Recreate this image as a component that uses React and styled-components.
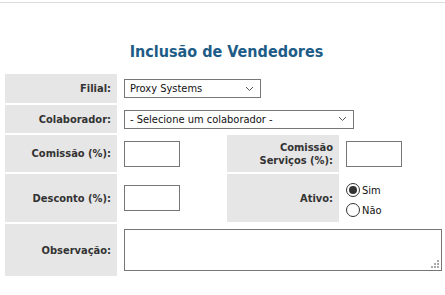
import React from 'react'
import styled, { createGlobalStyle } from 'styled-components'

const GlobalStyle = createGlobalStyle`
    body {
        margin: 0;
        background: #fff;
        font-family: "DejaVu Sans Condensed", "DejaVu Sans", sans-serif;
        color: #333;
    }
`

const Page = styled.div`
    width: 445px;
    height: 295px;
    padding-top: 2px;
    box-sizing: border-box;
`

const TopRule = styled.div`
    height: 1px;
    background: #dcdcdc;
`

const Title = styled.h2`
    margin: 39px 0 0;
    height: 32px;
    text-align: center;
    font-size: 16px;
    font-weight: bold;
    color: #1d5c87;
    padding-left: 8px;
`

const FormGrid = styled.div`
    display: grid;
    grid-template-columns: 112px 106px 112px 102px;
    grid-template-rows: 29px 28px 37px 48px 52px;
    gap: 2px;
    padding-left: 5px;
`

const Label = styled.div`
    background: #e6e6e6;
    display: flex;
    align-items: center;
    justify-content: flex-end;
    text-align: right;
    padding-right: 6px;
    font-size: 11px;
    font-weight: bold;
    line-height: 13px;
    color: #333;
`

const Field = styled.div`
    display: flex;
    align-items: center;
    padding-left: 5px;
    grid-column: ${p => p.$span ? `span ${p.$span}` : 'auto'};
`

const Select = styled.div`
    width: ${p => p.$width}px;
    height: 19px;
    box-sizing: border-box;
    border: 1px solid #767676;
    display: flex;
    align-items: center;
    justify-content: space-between;
    padding: 0 6px 0 5px;
    font-size: 11px;
    color: #111;
    background: #fff;
`

const TextInput = styled.div`
    width: 56px;
    height: 26px;
    box-sizing: border-box;
    border: 1px solid #767676;
    background: #fff;
`

const TextArea = styled.div`
    position: relative;
    width: 318px;
    height: 42px;
    box-sizing: border-box;
    border: 1px solid #767676;
    background: #fff;
`

const Grip = styled.svg`
    position: absolute;
    right: 1px;
    bottom: 1px;
`

const RadioGroup = styled.div`
    display: flex;
    flex-direction: column;
    gap: 6px;
    padding-top: 4px;
`

const RadioRow = styled.div`
    display: flex;
    align-items: center;
    gap: 2px;
    font-size: 11px;
    color: #111;
`

const RadioCircle = styled.span`
    width: 12px;
    height: 12px;
    border: 1px solid #333;
    border-radius: 50%;
    display: flex;
    align-items: center;
    justify-content: center;
    background: #fff;

    &::after {
        content: '';
        width: 8px;
        height: 8px;
        border-radius: 50%;
        background: ${p => p.$checked ? '#333' : 'transparent'};
    }
`

const Chevron = () => (
    <svg width='9' height='6' viewBox='0 0 9 6'>
        <path d='M1 1 L4.5 4.5 L8 1' fill='none' stroke='#555' strokeWidth='1' />
    </svg>
)

const Radio = ({ checked, children }) => (
    <RadioRow>
        <RadioCircle $checked={checked} />
        {children}
    </RadioRow>
)

export default function App () {
    return (
        <Page>
            <GlobalStyle />
            <TopRule />
            <Title>Inclusão de Vendedores</Title>
            <FormGrid>
                <Label>Filial:</Label>
                <Field $span={3}>
                    <Select $width={137}>Proxy Systems<Chevron /></Select>
                </Field>

                <Label>Colaborador:</Label>
                <Field $span={3}>
                    <Select $width={230}>- Selecione um colaborador -<Chevron /></Select>
                </Field>

                <Label>Comissão (%):</Label>
                <Field><TextInput /></Field>
                <Label>Comissão<br />Serviços (%):</Label>
                <Field><TextInput /></Field>

                <Label>Desconto (%):</Label>
                <Field><TextInput /></Field>
                <Label>Ativo:</Label>
                <Field>
                    <RadioGroup>
                        <Radio checked>Sim</Radio>
                        <Radio>Não</Radio>
                    </RadioGroup>
                </Field>

                <Label>Observação:</Label>
                <Field $span={3}>
                    <TextArea>
                        <Grip width='9' height='9' viewBox='0 0 9 9'>
                            <rect x='6' y='0' width='2' height='2' fill='#aaa' />
                            <rect x='3' y='3' width='2' height='2' fill='#aaa' />
                            <rect x='6' y='3' width='2' height='2' fill='#aaa' />
                            <rect x='0' y='6' width='2' height='2' fill='#aaa' />
                            <rect x='3' y='6' width='2' height='2' fill='#aaa' />
                            <rect x='6' y='6' width='2' height='2' fill='#aaa' />
                        </Grip>
                    </TextArea>
                </Field>
            </FormGrid>
        </Page>
    )
}
